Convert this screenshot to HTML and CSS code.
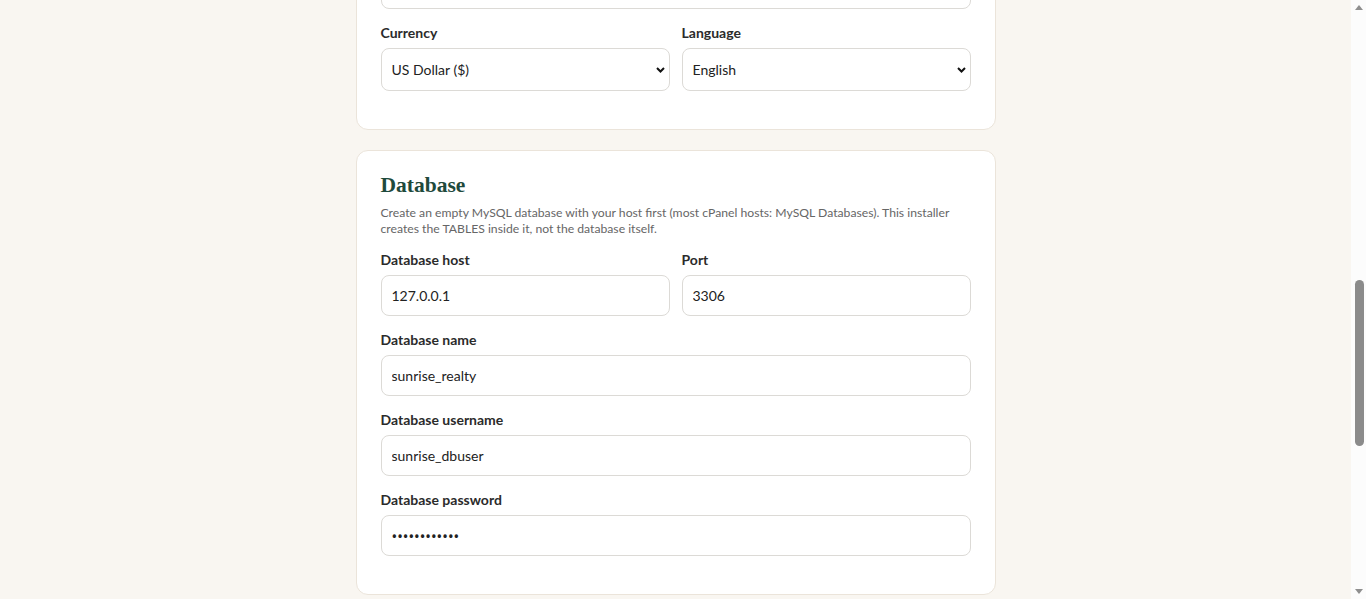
FILE: index.html
```html
<!DOCTYPE html>
<html lang="en">
<head>
    <meta charset="UTF-8">
    <meta name="viewport" content="width=device-width, initial-scale=1.0">
    <title>Sunrise Realty - Installer</title>
    <link rel="stylesheet" href="styles.css">
</head>
<body>
    <div class="page">
        <form class="install">
            <section class="card">
                <h2>Site</h2>
                <p class="hint">Basic information shown on the public pages and in emails.</p>
                <div class="field"><label>Site name</label><input type="text" value="Sunrise Realty"></div>
                <div class="row">
                    <div class="field"><label>Currency</label><select><option>US Dollar ($)</option><option>Euro (€)</option></select></div>
                    <div class="field"><label>Language</label><select><option>English</option><option>Español</option></select></div>
                </div>
            </section>
            <section class="card" id="database">
                <h2>Database</h2>
                <p class="hint">Create an empty MySQL database with your host first (most cPanel hosts: MySQL Databases). This installer creates the TABLES inside it, not the database itself.</p>
                <div class="row">
                    <div class="field"><label>Database host</label><input type="text" value="127.0.0.1"></div>
                    <div class="field"><label>Port</label><input type="text" value="3306"></div>
                </div>
                <div class="field"><label>Database name</label><input type="text" value="sunrise_realty"></div>
                <div class="field"><label>Database username</label><input type="text" value="sunrise_dbuser"></div>
                <div class="field"><label>Database password</label><input type="password" value="dbpassword12"></div>
            </section>
        </form>
    </div>
    <div class="scrollbar">
        <span class="arrow up"></span>
        <div class="track"><span class="thumb"></span></div>
        <span class="arrow down"></span>
    </div>
    <script src="script.js"></script>
</body>
</html>
```

FILE: styles.css
```css
body {
    margin: 0;
    padding-right: 15px;
    background-color: #f9f6f1;
    color: #2b2b2b;
    font-family: 'Lato', sans-serif;
}
.page {
    max-width: 640px;
    margin: 0 auto;
    padding: 40px 0 5px;
}
.card {
    background-color: #fff;
    border: 1px solid #ebe4da;
    border-radius: 12px;
    padding: 24px;
    margin-bottom: 20px;
}
.card:last-child {
    margin-bottom: 0;
}
.card h2 {
    font-family: 'Liberation Serif', serif;
    font-size: 21.5px;
    line-height: 20px;
    color: #1f4a3c;
    margin: 0 0 10px;
}
.hint {
    font-size: 12.2px;
    line-height: 16px;
    color: #666;
    margin: 0 0 13px;
}
.row {
    display: grid;
    grid-template-columns: 1fr 1fr;
    gap: 12px;
}
.field {
    margin-bottom: 14px;
}
.field label {
    display: block;
    font-size: 14px;
    font-weight: 700;
    line-height: 20px;
    margin-bottom: 5px;
    color: #2b2b2b;
}
.field input,
.field select {
    display: block;
    width: 100%;
    box-sizing: border-box;
    height: 41px;
    padding: 0 10px;
    border: 1px solid #dcdad6;
    border-radius: 8px;
    background-color: #fff;
    font-family: 'Lato', sans-serif;
    font-size: 14px;
    color: #222;
    outline: none;
}
.field input[type="password"] {
    font-family: 'Noto Sans', sans-serif;
    font-size: 15px;
}
.field select {
    height: 43px;
    appearance: none;
    -webkit-appearance: none;
    background-image: url("data:image/svg+xml,%3Csvg xmlns='http://www.w3.org/2000/svg' width='9' height='6' viewBox='0 0 9 6'%3E%3Cpath d='M1 1l3.5 3.5L8 1' fill='none' stroke='%23111' stroke-width='2'/%3E%3C/svg%3E");
    background-repeat: no-repeat;
    background-position: right 4px center;
}

/* window scrollbar, drawn since the page is shown mid-scroll */
.scrollbar {
    position: fixed;
    top: 0;
    right: 0;
    bottom: 0;
    width: 15px;
    background-color: #fcfcfc;
    display: flex;
    flex-direction: column;
    align-items: center;
}
.arrow {
    width: 0;
    height: 0;
    border-left: 4px solid transparent;
    border-right: 4px solid transparent;
    margin: 5px 0;
}
.arrow.up {
    border-bottom: 5px solid #8f8f8f;
}
.arrow.down {
    border-top: 5px solid #8f8f8f;
}
.track {
    flex: 1;
    width: 100%;
    display: flex;
    justify-content: center;
}
.thumb {
    width: 9px;
    height: 166px;
    margin-top: 265px;
    margin-left: 2px;
    border-radius: 5px;
    background-color: #8b8b8b;
}
```

FILE: script.js
```js
var db = document.getElementById('database');
window.scrollTo(0, db.getBoundingClientRect().top + window.scrollY - 150);
```
